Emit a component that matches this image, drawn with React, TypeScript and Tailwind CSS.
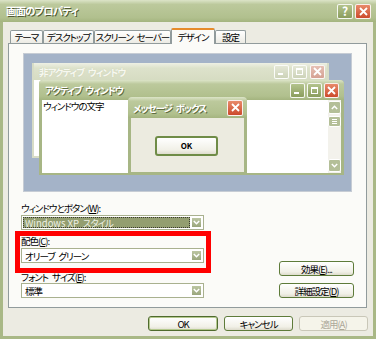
import React from "react";

const JP = "font-['Noto_Sans_CJK_JP','Noto_Sans',sans-serif] [font-feature-settings:'palt'_1] tracking-[-1px] whitespace-nowrap";
const SP = "\u2002";

type GlyphKind = "close" | "min" | "max" | "help";

function Glyph({ kind }: { kind: GlyphKind }) {
  if (kind === "close")
    return (
      <svg width="9" height="9" viewBox="0 0 9 9">
        <path d="M1 1L8 8M8 1L1 8" stroke="white" strokeWidth="1.8" />
      </svg>
    );
  if (kind === "min")
    return (
      <svg width="9" height="9" viewBox="0 0 9 9">
        <rect x="1" y="6" width="5" height="2" fill="white" />
      </svg>
    );
  if (kind === "max")
    return (
      <svg width="9" height="9" viewBox="0 0 9 9">
        <rect x="1.5" y="1.5" width="6" height="6" fill="none" stroke="white" />
        <rect x="1" y="1" width="7" height="2" fill="white" />
      </svg>
    );
  return <span className="text-[12px] font-bold leading-none tracking-normal text-white">?</span>;
}

function CapBtn({ kind, tone, size = "h-[15px] w-[15px]" }: { kind: GlyphKind; tone: string; size?: string }) {
  return (
    <div className={`flex items-center justify-center rounded-[2px] border border-white/90 ${size} ${tone}`}>
      <Glyph kind={kind} />
    </div>
  );
}

const OLIVE_BTN = "bg-[linear-gradient(to_bottom,#b3c38c,#8b9d5e)]";
const RED_BTN = "bg-[linear-gradient(to_bottom,#e88a6a,#cc4a2c)]";
const FADE_BTN = "bg-[linear-gradient(to_bottom,#e4e7d6,#cdd3b9)]";
const FADE_RED = "bg-[linear-gradient(to_bottom,#e6c0b4,#d5a193)]";
const ACTIVE_TITLE = "bg-[linear-gradient(to_bottom,#dce4c8_0%,#bcc99c_20%,#b1c08e_80%,#a4b47f_100%)]";

function Chevron({ up = false }: { up?: boolean }) {
  return (
    <svg width="7" height="5" viewBox="0 0 7 5">
      <path d={up ? "M0.8 4L3.5 1.3L6.2 4" : "M0.8 1L3.5 3.7L6.2 1"} fill="none" stroke="white" strokeWidth="1.5" />
    </svg>
  );
}

function Combo({ children, focused = false }: { children: React.ReactNode; focused?: boolean }) {
  return (
    <div className="flex h-[15px] w-[183px] items-stretch border border-[#a9b18f] bg-white p-[1px]">
      <div
        className={
          focused
            ? "flex flex-1 items-center bg-[#939e70] pl-[2px] text-[#eef0e4] outline-1 outline-dotted outline-[#3a3a30] -outline-offset-1"
            : "flex flex-1 items-center pl-[2px] text-black"
        }
      >
        {children}
      </div>
      <div className="ml-[1px] flex w-[11px] items-center justify-center rounded-[1px] border border-white bg-[linear-gradient(to_bottom,#bcc6a2,#9aa67c)]">
        <Chevron />
      </div>
    </div>
  );
}

function Btn({ children, w, def = false, disabled = false }: { children: React.ReactNode; w: string; def?: boolean; disabled?: boolean }) {
  return (
    <div
      className={`flex h-[15px] items-center justify-center rounded-[3px] border ${w} ${
        disabled
          ? "border-[#c9c7b8] bg-[#f5f4ea] text-[#aca899]"
          : def
          ? "border-[#4f6b2e] bg-[linear-gradient(to_bottom,#ffffff,#f1f0e7_75%,#dddbcc)] text-black shadow-[inset_0_0_0_1px_#b5c98e]"
          : "border-[#5e7b3a] bg-[linear-gradient(to_bottom,#ffffff,#f1f0e7_75%,#dddbcc)] text-black"
      }`}
    >
      {children}
    </div>
  );
}

function Tab({ label, w, active = false }: { label: string; w: string; active?: boolean }) {
  return (
    <div
      className={
        active
          ? `relative z-10 -mb-[1px] flex h-[16px] items-center justify-center rounded-t-[2px] border-x border-t-2 border-x-[#919b9c] border-t-[#e68b2c] bg-[#fbfbf8] ${w}`
          : `flex h-[13px] items-center justify-center rounded-t-[2px] border-x border-t border-[#919b9c] bg-[linear-gradient(to_bottom,#ffffff,#ecebe4)] ${w}`
      }
    >
      {label}
    </div>
  );
}

function U({ children }: { children: React.ReactNode }) {
  return <span className="underline underline-offset-1">{children}</span>;
}

function Preview() {
  return (
    <div className="relative ml-[14px] mt-[9px] h-[139px] w-[329px] overflow-hidden border border-[#c6ccd4] bg-[#a4b3c8]">
      {/* inactive window */}
      <div className="absolute left-[8px] top-[9px] h-[95px] w-[297px] border-2 border-t-0 border-[#d7dcc6] bg-white">
        <div className="flex h-[17px] items-center justify-between bg-[linear-gradient(to_bottom,#eef0e4,#dde2cb_30%,#d6dcc2)] pl-[5px] pr-[2px]">
          <span className="font-bold text-[#f7f8f0] [text-shadow:0_0_1px_#c3c9ae]">非アクティブ{SP}ウィンドウ</span>
          <div className="flex gap-[3px]">
            <CapBtn kind="min" tone={FADE_BTN} size="h-[14px] w-[15px]" />
            <CapBtn kind="max" tone={FADE_BTN} size="h-[14px] w-[15px]" />
            <CapBtn kind="close" tone={FADE_RED} size="h-[14px] w-[15px]" />
          </div>
        </div>
      </div>

      {/* active window */}
      <div className="absolute left-[15px] top-[26px] flex h-[95px] w-[305px] flex-col rounded-t-[4px] bg-[#a7b685] px-[3px] pb-[2px]">
        <div className={`-mx-[3px] flex h-[20px] shrink-0 items-center justify-between rounded-t-[4px] pl-[6px] pr-[5px] ${ACTIVE_TITLE}`}>
          <span className="font-bold text-white [text-shadow:1px_1px_0_#5f6c40]">アクティブ{SP}ウィンドウ</span>
          <div className="flex gap-[2px]">
            <CapBtn kind="min" tone={OLIVE_BTN} />
            <CapBtn kind="max" tone={OLIVE_BTN} />
            <CapBtn kind="close" tone={RED_BTN} />
          </div>
        </div>
        <div className="flex flex-1 bg-white">
          <div className="flex-1 pl-[1px] text-black">ウィンドウの文字</div>
          <div className="flex w-[13px] flex-col justify-between bg-[#f3f2ec] py-[1px]">
            <div className="flex flex-col gap-[2px]">
              <div className="flex h-[13px] items-center justify-center rounded-[2px] border border-white bg-[#b4bf98]">
                <Chevron up />
              </div>
              <div className="flex h-[11px] flex-col items-center justify-center gap-[1px] rounded-[2px] border border-white bg-[#b4bf98]">
                <div className="h-px w-[5px] bg-white" />
                <div className="h-px w-[5px] bg-white" />
                <div className="h-px w-[5px] bg-white" />
              </div>
            </div>
            <div className="flex h-[13px] items-center justify-center rounded-[2px] border border-white bg-[#b4bf98]">
              <Chevron />
            </div>
          </div>
        </div>
      </div>

      {/* message box */}
      <div className="absolute left-[104px] top-[43px] flex h-[78px] w-[119px] flex-col rounded-t-[4px] bg-[#a7b685] px-[3px] pb-[3px]">
        <div className={`-mx-[3px] flex h-[21px] shrink-0 items-center justify-between rounded-t-[4px] pl-[5px] pr-[4px] ${ACTIVE_TITLE}`}>
          <span className="font-bold text-white [text-shadow:1px_1px_0_#5f6c40]">メッセージ{SP}ボックス</span>
          <CapBtn kind="close" tone={RED_BTN} size="h-[16px] w-[16px]" />
        </div>
        <div className="flex-1 bg-[#ecebe0] pl-[24px] pt-[18px]">
          <div className="flex h-[20px] w-[63px] items-center justify-center rounded-[3px] border-2 border-[#6f8c47] bg-[linear-gradient(to_bottom,#ffffff,#f1f0e7_75%,#dfddcf)] text-[8px] font-bold tracking-normal text-black">
            OK
          </div>
        </div>
      </div>
    </div>
  );
}

export default function App() {
  return (
    <div className={`flex h-[339px] w-[376px] flex-col overflow-hidden bg-[#a9b886] text-[9.5px] leading-[12px] ${JP}`}>
      {/* title bar */}
      <div className={`flex h-[22px] shrink-0 items-center justify-between pl-[6px] pr-[5px] ${ACTIVE_TITLE}`}>
        <span className="text-[10.5px] font-bold text-white [text-shadow:1px_1px_0_#4f5b33]">画面のプロパティ</span>
        <div className="flex gap-[2px]">
          <CapBtn kind="help" tone={OLIVE_BTN} size="h-[15px] w-[16px]" />
          <CapBtn kind="close" tone={RED_BTN} size="h-[15px] w-[16px]" />
        </div>
      </div>

      <div className="mx-[3px] mb-[3px] flex flex-1 flex-col bg-[#ecebe2]">
        {/* tabs */}
        <div className="flex h-[21px] shrink-0 items-end pl-[7px] pt-[6px]">
          <Tab label="テーマ" w="w-[33px]" />
          <Tab label="デスクトップ" w="w-[51px]" />
          <Tab label={`スクリーン${SP}セーバー`} w="w-[77px]" />
          <Tab label="デザイン" w="w-[44px]" active />
          <Tab label="設定" w="w-[31px]" />
        </div>

        {/* panel */}
        <div className="relative ml-[5px] mr-[6px] h-[265px] shrink-0 border border-[#919b9c] bg-[#fbfbf8]">
          <Preview />

          <div className="flex items-end justify-between pl-[12px] pr-[12px]">
            <div className="flex flex-col">
              <div className="mt-[10px]">
                ウィンドウとボタン(<U>W</U>):
              </div>
              <div className="mt-[1px]">
                <Combo focused>
                  <span className="tracking-normal">Windows XP</span>
                  {SP}スタイル
                </Combo>
              </div>
              <div className="mt-[5px]">
                配色(<U>C</U>):
              </div>
              <div className="mt-[1px]">
                <Combo>オリーブ{SP}グリーン</Combo>
              </div>
              <div className="mt-[8px]">
                フォント{SP}サイズ(<U>E</U>):
              </div>
              <div>
                <Combo>標準</Combo>
              </div>
            </div>
            <div className="flex flex-col gap-[7px]">
              <Btn w="w-[75px]">
                効果(<U>E</U>)...
              </Btn>
              <Btn w="w-[75px]">
                詳細設定(<U>D</U>)
              </Btn>
            </div>
          </div>

          {/* red highlight annotation */}
          <div className="pointer-events-none absolute left-[6px] top-[187px] h-[42px] w-[196px] border-[5px] border-[#ff0000]" />
        </div>

        {/* dialog buttons */}
        <div className="mt-[8px] flex justify-end gap-[6px] pr-[5px]">
          <Btn w="w-[70px]" def>
            OK
          </Btn>
          <Btn w="w-[69px]">キャンセル</Btn>
          <Btn w="w-[69px]" disabled>
            適用(<U>A</U>)
          </Btn>
        </div>
      </div>
    </div>
  );
}
